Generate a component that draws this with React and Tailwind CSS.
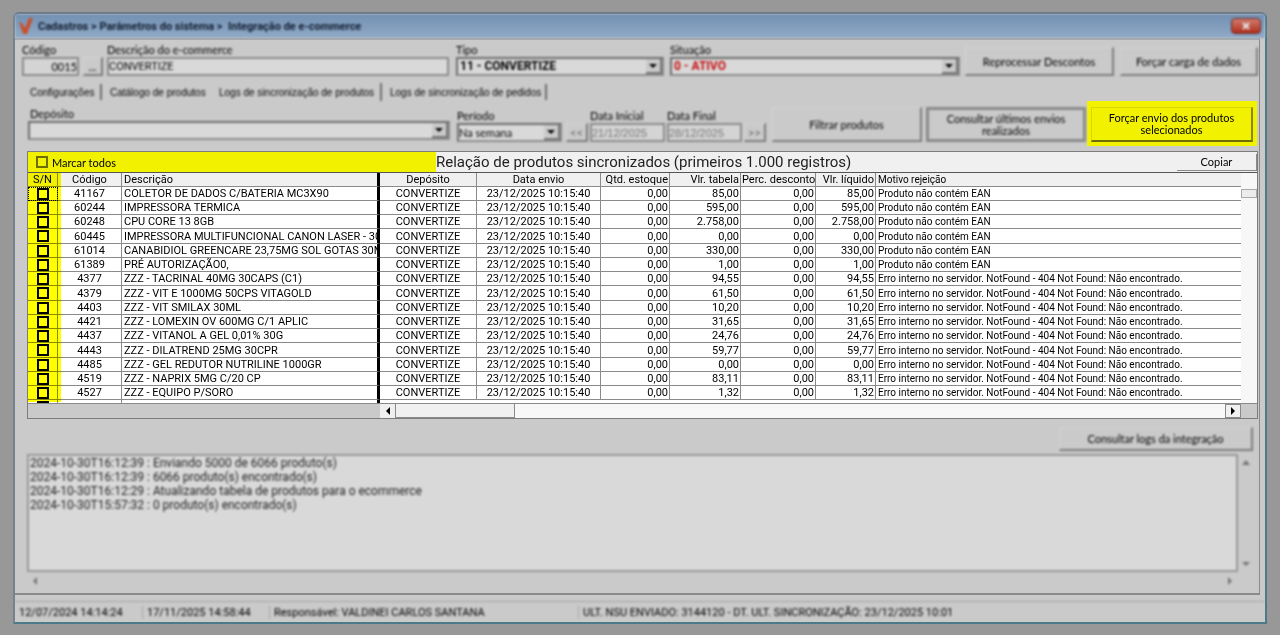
import { useState } from 'react';

const NOT_FOUND =
  'Erro interno no servidor. NotFound - 404 Not Found: Não encontrado.';
const NO_EAN = 'Produto não contém EAN';

const products = [
  { code: '41167', name: 'COLETOR DE DADOS C/BATERIA MC3X90', price: '85,00', reason: NO_EAN },
  { code: '60244', name: 'IMPRESSORA TERMICA', price: '595,00', reason: NO_EAN },
  { code: '60248', name: 'CPU CORE 13 8GB', price: '2.758,00', reason: NO_EAN },
  { code: '60445', name: 'IMPRESSORA MULTIFUNCIONAL CANON LASER - 30', price: '0,00', reason: NO_EAN },
  { code: '61014', name: 'CANABIDIOL GREENCARE 23,75MG SOL GOTAS 30M', price: '330,00', reason: NO_EAN },
  { code: '61389', name: 'PRÉ AUTORIZAÇÃO0,', price: '1,00', reason: NO_EAN },
  { code: '4377', name: 'ZZZ - TACRINAL 40MG 30CAPS (C1)', price: '94,55', reason: NOT_FOUND },
  { code: '4379', name: 'ZZZ - VIT E 1000MG 50CPS VITAGOLD', price: '61,50', reason: NOT_FOUND },
  { code: '4403', name: 'ZZZ - VIT SMILAX 30ML', price: '10,20', reason: NOT_FOUND },
  { code: '4421', name: 'ZZZ - LOMEXIN OV 600MG C/1 APLIC', price: '31,65', reason: NOT_FOUND },
  { code: '4437', name: 'ZZZ - VITANOL A GEL 0,01% 30G', price: '24,76', reason: NOT_FOUND },
  { code: '4443', name: 'ZZZ - DILATREND 25MG 30CPR', price: '59,77', reason: NOT_FOUND },
  { code: '4485', name: 'ZZZ - GEL REDUTOR NUTRILINE 1000GR', price: '0,00', reason: NOT_FOUND },
  { code: '4519', name: 'ZZZ - NAPRIX 5MG C/20 CP', price: '83,11', reason: NOT_FOUND },
  { code: '4527', name: 'ZZZ - EQUIPO P/SORO', price: '1,32', reason: NOT_FOUND },
];

const logs = `2024-10-30T16:12:39 : Enviando 5000 de 6066 produto(s)
2024-10-30T16:12:39 : 6066 produto(s) encontrado(s)
2024-10-30T16:12:29 : Atualizando tabela de produtos para o ecommerce
2024-10-30T15:57:32 : 0 produto(s) encontrado(s)`;

const Arrow = ({ className, points }) => (
  <svg viewBox="0 0 8 8" className={className} fill="currentColor">
    <polygon points={points} />
  </svg>
);

const UP = '4,2 8,7 0,7';
const DOWN = '0,2 8,2 4,6';
const LEFT = '6,0 6,8 2,4';
const RIGHT = '2,0 2,8 6,4';

const Select = ({ id, value, textClass }) => (
  <div className="relative flex h-[19px] border-2 border-t-[#6e6e6e] border-r-[#8c8c8c] border-b-[#8c8c8c] border-l-[#6e6e6e] bg-[#d9d9d9]">
    <select
      id={id}
      defaultValue={value}
      className={`w-full appearance-none bg-transparent outline-none ${textClass}`}
    >
      <option>{value}</option>
    </select>
    <span className="pointer-events-none absolute top-0 right-0 flex h-[15px] w-4 items-center justify-center border-r-2 border-b-2 border-[#777] bg-[#cacaca]">
      <Arrow className="size-2" points={DOWN} />
    </span>
  </div>
);

const Button = ({ children, className }) => (
  <button
    className={`border-t border-r-2 border-b-2 border-l border-t-[#d4d4d4] border-r-[#7d7d7d] border-b-[#7d7d7d] border-l-[#d4d4d4] ${className}`}
  >
    {children}
  </button>
);

const Header = () => (
  <div className="flex items-end pr-px pl-[7px] blur-[1px]">
    <div className="flex w-[57px] flex-col gap-px">
      <label htmlFor="codigo">Código</label>
      <input
        id="codigo"
        defaultValue="0015"
        className="h-[19px] w-full border-2 border-[#8c8c8c] bg-[#d4d4d4] text-right"
      />
    </div>
    <Button className="mr-1 ml-1 h-[19px] w-5">...</Button>
    <div className="flex min-w-0 flex-1 flex-col gap-px">
      <label htmlFor="descricao">Descrição do e-commerce</label>
      <input
        id="descricao"
        defaultValue="CONVERTIZE"
        className="h-[19px] w-full border-2 border-[#8c8c8c] bg-[#d9d9d9] font-['Roboto',sans-serif]"
      />
    </div>
    <div className="ml-[7px] flex w-[208px] flex-col gap-px">
      <label htmlFor="tipo">Tipo</label>
      <Select
        id="tipo"
        value="11 - CONVERTIZE"
        textClass="pl-[2px] font-['Roboto',sans-serif] text-[12px] font-bold"
      />
    </div>
    <div className="ml-1.5 flex w-[290px] flex-col gap-px">
      <label htmlFor="situacao">Situação</label>
      <Select
        id="situacao"
        value="0 - ATIVO"
        textClass="pl-[2px] font-['Roboto',sans-serif] text-[12px] font-bold text-[#c41010]"
      />
    </div>
    <Button className="ml-[5px] h-[29px] w-[149px]">Reprocessar Descontos</Button>
    <Button className="ml-1.5 h-[29px] w-[138px]">Forçar carga de dados</Button>
  </div>
);

const Tabs = () => (
  <div
    role="tablist"
    className="mt-[7px] flex h-[18px] items-center pl-[15px] font-['Liberation_Sans',sans-serif] text-[10px] blur-[1px]"
  >
    <button role="tab" className="h-4 w-[72px] border-r-2 border-[#6e6e6e] text-left whitespace-nowrap">
      Configurações
    </button>
    <button role="tab" className="w-[109px] pl-2 text-left whitespace-nowrap">
      Catálogo de produtos
    </button>
    <button
      role="tab"
      aria-selected="true"
      className="h-[18px] w-[171px] border-r-2 border-[#6e6e6e] pl-2 text-left whitespace-nowrap"
    >
      Logs de sincronização de produtos
    </button>
    <button role="tab" className="h-4 w-[165px] border-r-2 border-[#6e6e6e] pl-2 text-left whitespace-nowrap">
      Logs de sincronização de pedidos
    </button>
  </div>
);

const Filters = () => (
  <div className="flex pr-[2px] pl-[13px]">
    <div className="flex min-w-0 flex-1 pt-1.5 blur-[1px]">
      <div className="flex min-w-0 flex-1 flex-col gap-px">
        <label htmlFor="deposito" className="pl-[2px]">Depósito</label>
        <Select id="deposito" value="" />
      </div>
      <div className="ml-[7px] flex w-[105px] flex-col gap-px pt-[2px]">
        <label htmlFor="periodo">Período</label>
        <Select id="periodo" value="Na semana" />
      </div>
      <Button className="mt-4 ml-1 h-[19px] w-[22px] text-[#666]">&lt;&lt;</Button>
      <div className="ml-[2px] flex w-[75px] flex-col gap-px pt-[2px]">
        <label htmlFor="inicio">Data Inicial</label>
        <input
          id="inicio"
          defaultValue="21/12/2025"
          className="h-[19px] w-full border-2 border-[#8c8c8c] bg-[#d4d4d4] font-['Liberation_Sans',sans-serif] text-[#777]"
        />
      </div>
      <div className="ml-[2px] flex w-[75px] flex-col gap-px pt-[2px]">
        <label htmlFor="fim">Data Final</label>
        <input
          id="fim"
          defaultValue="28/12/2025"
          className="h-[19px] w-full border-2 border-[#8c8c8c] bg-[#d4d4d4] font-['Liberation_Sans',sans-serif] text-[#777]"
        />
      </div>
      <Button className="mt-4 ml-[2px] h-[19px] w-[22px] text-[#666]">&gt;&gt;</Button>
      <Button className="ml-1.5 h-[35px] w-[150px]">Filtrar produtos</Button>
      <button className="mr-px ml-1 h-[35px] w-[160px] border-[3px] border-[#8a8a8a] px-4 leading-3">
        Consultar últimos envios realizados
      </button>
    </div>
    <div className="bg-[#f2f200] px-1 pt-1.5 pb-1">
      <button className="h-[35px] w-[162px] border-t border-r-2 border-b-2 border-l border-t-[#d8d800] border-r-[#8a8a00] border-b-[#6e6e00] border-l-[#d8d800] px-4 leading-3">
        Forçar envio dos produtos selecionados
      </button>
    </div>
  </div>
);

const Grid = () => {
  const [selected, setSelected] = useState([]);
  const all = selected.length === products.length;

  const toggleAll = () => setSelected(all ? [] : products.map((p) => p.code));
  const toggle = (code) =>
    setSelected(
      selected.includes(code)
        ? selected.filter((c) => c !== code)
        : [...selected, code]
    );

  const cell = 'overflow-hidden border-r border-b border-[#8a8a8a] px-px';
  const box =
    'mx-auto block size-3 appearance-none border-2 border-black checked:bg-black';

  return (
    <div className="relative mt-[5px] mr-px ml-3 border border-[#7d7d7d] bg-[#f0f0f0]">
      <div className="flex h-[21px] items-center border-b border-[#555]">
        <label className="flex h-full w-[408px] items-center gap-1 bg-[#f2f200] pl-2">
          <input
            type="checkbox"
            checked={all}
            onChange={toggleAll}
            className="size-3 appearance-none border-2 border-[#6e6e00] checked:bg-black"
          />
          Marcar todos
        </label>
        <h2 className="flex-1 font-['Roboto',sans-serif] text-[15px] leading-5 whitespace-nowrap text-[#222]">
          Relação de produtos sincronizados (primeiros 1.000 registros)
        </h2>
        <button className="h-[17px] w-20 border-r border-b border-[#8a8a8a]">
          Copiar
        </button>
      </div>

      <div className="flex h-[230px] overflow-hidden font-['Roboto',sans-serif]">
        <table className="w-full flex-1 table-fixed border-separate border-spacing-0 self-start bg-white text-center leading-[13px] whitespace-nowrap">
          <thead className="bg-[#f0f0f0]">
            <tr className="h-[14px]">
              <th className={`${cell} w-[30px] font-normal`}>S/N</th>
              <th className={`${cell} w-16 font-normal`}>Código</th>
              <th className={`${cell} w-[258px] border-r-3 border-r-black pl-[2px] text-left font-normal`}>Descrição</th>
              <th className={`${cell} w-[97px] font-normal`}>Depósito</th>
              <th className={`${cell} w-[124px] font-normal`}>Data envio</th>
              <th className={`${cell} w-[69px] text-right font-normal`}>Qtd. estoque</th>
              <th className={`${cell} w-[71px] text-right font-normal`}>Vlr. tabela</th>
              <th className={`${cell} w-[75px] text-right font-normal`}>Perc. desconto</th>
              <th className={`${cell} w-[60px] text-right font-normal`}>Vlr. líquido</th>
              <th className={`${cell} border-r-0 pl-[2px] text-left text-[10px] font-normal`}>Motivo rejeição</th>
            </tr>
          </thead>
          <tbody>
            {products.map((p) => (
              <tr key={p.code} className="group h-[14px] nth-[4n]:h-[15px]">
                <td className={`${cell} -outline-offset-1 outline-black group-first:outline group-first:outline-dotted`}>
                  <input
                    type="checkbox"
                    aria-label={p.code}
                    checked={selected.includes(p.code)}
                    onChange={() => toggle(p.code)}
                    className={box}
                  />
                </td>
                <td className={cell}>{p.code}</td>
                <td className={`${cell} border-r-3 border-r-black pl-[2px] text-left`}>{p.name}</td>
                <td className={cell}>CONVERTIZE</td>
                <td className={cell}>23/12/2025 10:15:40</td>
                <td className={`${cell} text-right`}>0,00</td>
                <td className={`${cell} text-right`}>{p.price}</td>
                <td className={`${cell} text-right`}>0,00</td>
                <td className={`${cell} text-right`}>{p.price}</td>
                <td className={`${cell} border-r-0 pl-[2px] text-left text-[10px]`}>{p.reason}</td>
              </tr>
            ))}
            <tr className="h-[14px]">
              <td className={cell}>
                <input type="checkbox" aria-label="Próximo produto" className={box} />
              </td>
              <td className={cell} />
              <td className={`${cell} border-r-3 border-r-black`} />
              <td colSpan={7} />
            </tr>
          </tbody>
        </table>
        <div className="w-4 bg-[#f7f7f7] pt-4">
          <div className="h-[9px] border border-[#aaa] bg-[#ececec]" />
        </div>
      </div>

      <div className="flex h-[15px] border-t border-[#8a8a8a] bg-[#cacaca]">
        <div className="w-[352px]" />
        <button aria-label="Rolar para a esquerda" className="flex w-4 items-center justify-center border-r border-[#8a8a8a] bg-[#f0f0f0]">
          <Arrow className="size-2" points={LEFT} />
        </button>
        <div className="w-[119px] border-r border-b border-[#8a8a8a] bg-[#f0f0f0]" />
        <div className="flex-1 bg-[#f8f8f8]" />
        <button aria-label="Rolar para a direita" className="flex w-4 items-center justify-center border border-[#8a8a8a] bg-[#f0f0f0]">
          <Arrow className="size-2" points={RIGHT} />
        </button>
        <div className="w-4" />
      </div>

      {/* marker over the selection column */}
      <div className="pointer-events-none absolute top-[21px] left-0 h-[229px] w-[33px] bg-[#ffff00] mix-blend-multiply" />
    </div>
  );
};

const LogPanel = () => (
  <div className="mt-2 pr-[5px] pl-3 blur-[1px]">
    <div className="flex justify-end pr-px">
      <Button className="h-6 w-[194px]">Consultar logs da integração</Button>
    </div>
    <div className="mt-[3px] flex text-[#777]">
      <textarea
        aria-label="Logs"
        readOnly
        value={logs}
        className="h-[118px] flex-1 resize-none overflow-hidden border-2 border-[#999] bg-[#d9d9d9] pl-px font-['Roboto',sans-serif] text-[12px] leading-[14px] text-[#222]"
      />
      <div className="flex w-4 flex-col items-center justify-between py-1">
        <Arrow className="size-2" points={UP} />
        <Arrow className="size-2" points={DOWN} />
      </div>
    </div>
    <div className="flex h-[18px] items-center justify-between pr-5 pl-1 text-[#777]">
      <Arrow className="size-2" points={LEFT} />
      <Arrow className="size-2" points={RIGHT} />
    </div>
  </div>
);

const App = () => {
  return (
    <div className="min-h-screen bg-[#989898] px-[13px] py-3 font-['Lato',sans-serif] text-[11px] leading-[13px] text-black">
      <div className="rounded-t-md border-2 border-[#4d7a88] border-t-[#6d7680] border-l-[#76828c] bg-[#cacaca]">
        <header className="flex h-6 items-center gap-1 bg-linear-to-b from-[#7390b2] to-[#90aac6] pr-1 pl-[3px] blur-[1px]">
          <svg viewBox="0 0 16 18" className="h-[18px] w-4">
            <path d="M1 5 L4 6 L7 11 L11 1 L15 1 L9 17 L5 17 Z" fill="#c8512c" />
          </svg>
          <h1 className="flex-1 font-['Roboto',sans-serif] font-bold whitespace-pre text-[#101c30]">
            {'Cadastros > Parâmetros do sistema >  Integração de e-commerce'}
          </h1>
          <button
            aria-label="Fechar"
            className="flex h-4 w-[30px] items-center justify-center rounded-sm border border-[#6b2a24] bg-linear-to-b from-[#cf7a6c] to-[#b02c1a]"
          >
            <svg viewBox="0 0 8 8" className="size-2" stroke="#e8e8e8" strokeWidth="2">
              <path d="M1 1 L7 7 M7 1 L1 7" />
            </svg>
          </button>
        </header>

        <main className="mr-[5px] border-t-2 border-r border-b-2 border-t-[#a9a9a9] border-r-[#8a8a8a] border-b-[#8a8a8a] pt-[3px] pb-[3px]">
          <Header />
          <Tabs />
          <Filters />
          <Grid />
          <LogPanel />
        </main>

        <footer className="mt-1.5 flex h-[21px] items-center border-t border-[#a5a5a5] font-['Roboto',sans-serif] whitespace-nowrap blur-[1px]">
          <span className="w-[128px] border-r border-[#aaa] pl-1">12/07/2024 14:14:24</span>
          <span className="w-[127px] border-r border-[#aaa] pl-1">17/11/2025 14:58:44</span>
          <span className="w-[309px] border-r border-[#aaa] pl-1">
            Responsável: VALDINEI CARLOS SANTANA
          </span>
          <span className="pl-1">
            ULT. NSU ENVIADO: 3144120 - DT. ULT. SINCRONIZAÇÃO: 23/12/2025 10:01
          </span>
        </footer>
      </div>
    </div>
  );
};

export default App;
